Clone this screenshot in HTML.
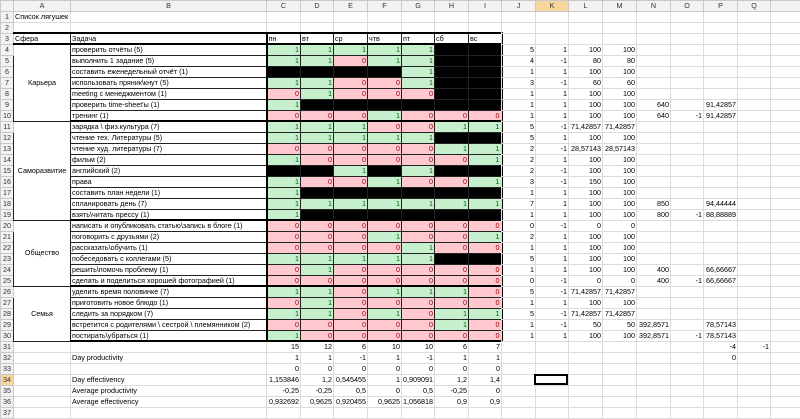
<!DOCTYPE html>
<html><head><meta charset="utf-8">
<style>
body{margin:0;width:800px;height:412px;overflow:hidden;background:#fff;font-family:"Liberation Sans",Arial,sans-serif;font-size:7.2px;color:#000;position:relative}
table{border-collapse:collapse;table-layout:fixed;position:absolute;top:0}
td{height:10px;line-height:10px;padding:0 1px;border:1px solid #dcdcdc;white-space:nowrap;overflow:hidden;text-align:left}
td.v{overflow:visible}
td.n,tr.n td{text-align:right}
tr.hd td{background:#f2f2f2;border-color:#c9c9c9;text-align:center;color:#333}
td.h{background:#f2f2f2;border-color:#c9c9c9;text-align:center;color:#333;padding:0}
td.sel{background:#f7d69a!important}
tr.b td{border-color:#222}
tr.b td.h{border-color:#c9c9c9}
td.g{background:#c6efce;color:#006100;text-align:right}
td.r{background:#ffc7ce;color:#9c0006;text-align:right}
td.k{background:#000}
td.c{text-align:center}
tr.t td:not(.h){border-top:2px solid #000}
tr.bt td:not(.h){border-bottom:2px solid #000}
tr.s td{height:9px;line-height:9px}
td.L{border-left:2px solid #000!important}
td.R{border-right:2px solid #000!important}
#t1{left:0;width:501px}
#t2{left:501px;width:299px}
#t2 td{text-align:right}
#t2 tr.hd td{text-align:center}
.box{position:absolute;left:534px;top:374px;width:30px;height:7px;border:2px solid #000}
</style></head><body>
<table id="t1">
<colgroup><col style="width:13px"><col style="width:57px"><col style="width:196px"><col style="width:34px"><col style="width:33px"><col style="width:34px"><col style="width:34px"><col style="width:33px"><col style="width:34px"><col style="width:33px"></colgroup>
<tr class="hd"><td></td><td>A</td><td>B</td><td>C</td><td>D</td><td>E</td><td>F</td><td>G</td><td>H</td><td>I</td></tr>
<tr><td class="h">1</td><td class="v">Список лягушек</td><td></td><td></td><td></td><td></td><td></td><td></td><td></td><td></td></tr>
<tr class="s"><td class="h">2</td><td></td><td></td><td></td><td></td><td></td><td></td><td></td><td></td><td></td></tr>
<tr class="b t bt s"><td class="h">3</td><td>Сфера</td><td>Задача</td><td class="L">пн</td><td>вт</td><td>ср</td><td>чтв</td><td>пт</td><td>сб</td><td class="R">вс</td></tr>
<tr class="b"><td class="h">4</td><td rowspan="7" class="c">Карьера</td><td>проверить отчёты (5)</td><td class="g L">1</td><td class="g">1</td><td class="g">1</td><td class="g">1</td><td class="g">1</td><td class="k"></td><td class="k R"></td></tr>
<tr class="b"><td class="h">5</td><td>выполнить 1 задание (5)</td><td class="g L">1</td><td class="g">1</td><td class="r">0</td><td class="g">1</td><td class="g">1</td><td class="k"></td><td class="k R"></td></tr>
<tr class="b"><td class="h">6</td><td>составить еженедельный отчёт (1)</td><td class="k L"></td><td class="k"></td><td class="k"></td><td class="k"></td><td class="g">1</td><td class="k"></td><td class="k R"></td></tr>
<tr class="b"><td class="h">7</td><td>использовать пряник\кнут (5)</td><td class="g L">1</td><td class="g">1</td><td class="r">0</td><td class="r">0</td><td class="g">1</td><td class="k"></td><td class="k R"></td></tr>
<tr class="b"><td class="h">8</td><td>meeting с менеджментом (1)</td><td class="r L">0</td><td class="g">1</td><td class="r">0</td><td class="r">0</td><td class="r">0</td><td class="k"></td><td class="k R"></td></tr>
<tr class="b"><td class="h">9</td><td>проверить time-sheet'ы (1)</td><td class="g L">1</td><td class="k"></td><td class="k"></td><td class="k"></td><td class="k"></td><td class="k"></td><td class="k R"></td></tr>
<tr class="b bt s"><td class="h">10</td><td>тренинг (1)</td><td class="r L">0</td><td class="r">0</td><td class="r">0</td><td class="g">1</td><td class="r">0</td><td class="r">0</td><td class="r R">0</td></tr>
<tr class="b"><td class="h">11</td><td rowspan="9" class="c">Саморазвитие</td><td>зарядка \ физ.культура (7)</td><td class="g L">1</td><td class="g">1</td><td class="g">1</td><td class="r">0</td><td class="r">0</td><td class="g">1</td><td class="g R">1</td></tr>
<tr class="b"><td class="h">12</td><td>чтение тех. Литературы (5)</td><td class="g L">1</td><td class="g">1</td><td class="g">1</td><td class="g">1</td><td class="g">1</td><td class="k"></td><td class="k R"></td></tr>
<tr class="b"><td class="h">13</td><td>чтение худ. литературы (7)</td><td class="r L">0</td><td class="r">0</td><td class="r">0</td><td class="r">0</td><td class="r">0</td><td class="g">1</td><td class="g R">1</td></tr>
<tr class="b"><td class="h">14</td><td>фильм (2)</td><td class="g L">1</td><td class="r">0</td><td class="r">0</td><td class="r">0</td><td class="r">0</td><td class="r">0</td><td class="g R">1</td></tr>
<tr class="b"><td class="h">15</td><td>английский (2)</td><td class="k L"></td><td class="k"></td><td class="g">1</td><td class="k"></td><td class="g">1</td><td class="k"></td><td class="k R"></td></tr>
<tr class="b"><td class="h">16</td><td>права</td><td class="g L">1</td><td class="r">0</td><td class="r">0</td><td class="g">1</td><td class="r">0</td><td class="r">0</td><td class="g R">1</td></tr>
<tr class="b"><td class="h">17</td><td>составить план недели (1)</td><td class="g L">1</td><td class="k"></td><td class="k"></td><td class="k"></td><td class="k"></td><td class="k"></td><td class="k R"></td></tr>
<tr class="b"><td class="h">18</td><td>спланировать день (7)</td><td class="g L">1</td><td class="g">1</td><td class="g">1</td><td class="g">1</td><td class="g">1</td><td class="g">1</td><td class="g R">1</td></tr>
<tr class="b bt s"><td class="h">19</td><td>взять\читать прессу (1)</td><td class="g L">1</td><td class="k"></td><td class="k"></td><td class="k"></td><td class="k"></td><td class="k"></td><td class="k R"></td></tr>
<tr class="b"><td class="h">20</td><td rowspan="6" class="c">Общество</td><td>написать и опубликовать статью\запись в блоге (1)</td><td class="r L">0</td><td class="r">0</td><td class="r">0</td><td class="r">0</td><td class="r">0</td><td class="r">0</td><td class="r R">0</td></tr>
<tr class="b"><td class="h">21</td><td>поговорить с друзьями (2)</td><td class="r L">0</td><td class="r">0</td><td class="r">0</td><td class="g">1</td><td class="r">0</td><td class="r">0</td><td class="g R">1</td></tr>
<tr class="b"><td class="h">22</td><td>рассказать\обучить (1)</td><td class="r L">0</td><td class="r">0</td><td class="r">0</td><td class="r">0</td><td class="g">1</td><td class="r">0</td><td class="r R">0</td></tr>
<tr class="b"><td class="h">23</td><td>побеседовать с коллегами (5)</td><td class="g L">1</td><td class="g">1</td><td class="g">1</td><td class="g">1</td><td class="g">1</td><td class="k"></td><td class="k R"></td></tr>
<tr class="b"><td class="h">24</td><td>решить\помочь проблему (1)</td><td class="r L">0</td><td class="g">1</td><td class="r">0</td><td class="r">0</td><td class="r">0</td><td class="r">0</td><td class="r R">0</td></tr>
<tr class="b bt s"><td class="h">25</td><td>сделать и поделиться хорошей фотографией (1)</td><td class="r L">0</td><td class="r">0</td><td class="r">0</td><td class="r">0</td><td class="r">0</td><td class="r">0</td><td class="r R">0</td></tr>
<tr class="b"><td class="h">26</td><td rowspan="5" class="c">Семья</td><td>уделить время половинке (7)</td><td class="g L">1</td><td class="g">1</td><td class="r">0</td><td class="g">1</td><td class="g">1</td><td class="g">1</td><td class="r R">0</td></tr>
<tr class="b"><td class="h">27</td><td>приготовить новое блюдо (1)</td><td class="r L">0</td><td class="g">1</td><td class="r">0</td><td class="r">0</td><td class="r">0</td><td class="r">0</td><td class="r R">0</td></tr>
<tr class="b"><td class="h">28</td><td>следить за порядком (7)</td><td class="g L">1</td><td class="g">1</td><td class="r">0</td><td class="g">1</td><td class="r">0</td><td class="g">1</td><td class="g R">1</td></tr>
<tr class="b"><td class="h">29</td><td>встретится с родителями \ сестрой \ племянником (2)</td><td class="r L">0</td><td class="r">0</td><td class="r">0</td><td class="r">0</td><td class="r">0</td><td class="g">1</td><td class="r R">0</td></tr>
<tr class="b bt s"><td class="h">30</td><td>постирать\убраться (1)</td><td class="g L">1</td><td class="r">0</td><td class="r">0</td><td class="r">0</td><td class="r">0</td><td class="r">0</td><td class="r R">0</td></tr>
<tr><td class="h">31</td><td></td><td></td><td class="n">15</td><td class="n">12</td><td class="n">6</td><td class="n">10</td><td class="n">10</td><td class="n">6</td><td class="n">7</td></tr>
<tr><td class="h">32</td><td></td><td>Day productivity</td><td class="n">1</td><td class="n">1</td><td class="n">-1</td><td class="n">1</td><td class="n">-1</td><td class="n">1</td><td class="n">1</td></tr>
<tr><td class="h">33</td><td></td><td></td><td class="n">0</td><td class="n">0</td><td class="n">0</td><td class="n">0</td><td class="n">0</td><td class="n">0</td><td class="n">0</td></tr>
<tr><td class="h sel">34</td><td></td><td>Day effectivency</td><td class="n">1,153846</td><td class="n">1,2</td><td class="n">0,545455</td><td class="n">1</td><td class="n">0,909091</td><td class="n">1,2</td><td class="n">1,4</td></tr>
<tr><td class="h">35</td><td></td><td>Average productivity</td><td class="n">-0,25</td><td class="n">-0,25</td><td class="n">0,5</td><td class="n">0</td><td class="n">0,5</td><td class="n">-0,25</td><td class="n">0</td></tr>
<tr><td class="h">36</td><td></td><td>Average effectivency</td><td class="n">0,932692</td><td class="n">0,9625</td><td class="n">0,920455</td><td class="n">0,9625</td><td class="n">1,056818</td><td class="n">0,9</td><td class="n">0,9</td></tr>
<tr><td class="h">37</td><td></td><td></td><td></td><td></td><td></td><td></td><td></td><td></td><td></td></tr>
</table>

<table id="t2">
<colgroup><col style="width:34px"><col style="width:33px"><col style="width:34px"><col style="width:34px"><col style="width:34px"><col style="width:33px"><col style="width:34px"><col style="width:33px"><col style="width:30px"></colgroup>
<tr class="hd"><td>J</td><td class="sel">K</td><td>L</td><td>M</td><td>N</td><td>O</td><td>P</td><td>Q</td><td></td></tr>
<tr><td></td><td></td><td></td><td></td><td></td><td></td><td></td><td></td><td></td></tr>
<tr><td></td><td></td><td></td><td></td><td></td><td></td><td></td><td></td><td></td></tr>
<tr><td></td><td></td><td></td><td></td><td></td><td></td><td></td><td></td><td></td></tr>
<tr><td>5</td><td>1</td><td>100</td><td>100</td><td></td><td></td><td></td><td></td><td></td></tr>
<tr><td>4</td><td>-1</td><td>80</td><td>80</td><td></td><td></td><td></td><td></td><td></td></tr>
<tr><td>1</td><td>1</td><td>100</td><td>100</td><td></td><td></td><td></td><td></td><td></td></tr>
<tr><td>3</td><td>-1</td><td>60</td><td>60</td><td></td><td></td><td></td><td></td><td></td></tr>
<tr><td>1</td><td>1</td><td>100</td><td>100</td><td></td><td></td><td></td><td></td><td></td></tr>
<tr><td>1</td><td>1</td><td>100</td><td>100</td><td>640</td><td></td><td>91,42857</td><td></td><td></td></tr>
<tr><td>1</td><td>1</td><td>100</td><td>100</td><td>640</td><td>-1</td><td>91,42857</td><td></td><td></td></tr>
<tr><td>5</td><td>-1</td><td>71,42857</td><td>71,42857</td><td></td><td></td><td></td><td></td><td></td></tr>
<tr><td>5</td><td>1</td><td>100</td><td>100</td><td></td><td></td><td></td><td></td><td></td></tr>
<tr><td>2</td><td>-1</td><td>28,57143</td><td>28,57143</td><td></td><td></td><td></td><td></td><td></td></tr>
<tr><td>2</td><td>1</td><td>100</td><td>100</td><td></td><td></td><td></td><td></td><td></td></tr>
<tr><td>2</td><td>-1</td><td>100</td><td>100</td><td></td><td></td><td></td><td></td><td></td></tr>
<tr><td>3</td><td>-1</td><td>150</td><td>100</td><td></td><td></td><td></td><td></td><td></td></tr>
<tr><td>1</td><td>1</td><td>100</td><td>100</td><td></td><td></td><td></td><td></td><td></td></tr>
<tr><td>7</td><td>1</td><td>100</td><td>100</td><td>850</td><td></td><td>94,44444</td><td></td><td></td></tr>
<tr><td>1</td><td>1</td><td>100</td><td>100</td><td>800</td><td>-1</td><td>88,88889</td><td></td><td></td></tr>
<tr><td>0</td><td>-1</td><td>0</td><td>0</td><td></td><td></td><td></td><td></td><td></td></tr>
<tr><td>2</td><td>1</td><td>100</td><td>100</td><td></td><td></td><td></td><td></td><td></td></tr>
<tr><td>1</td><td>1</td><td>100</td><td>100</td><td></td><td></td><td></td><td></td><td></td></tr>
<tr><td>5</td><td>1</td><td>100</td><td>100</td><td></td><td></td><td></td><td></td><td></td></tr>
<tr><td>1</td><td>1</td><td>100</td><td>100</td><td>400</td><td></td><td>66,66667</td><td></td><td></td></tr>
<tr><td>0</td><td>-1</td><td>0</td><td>0</td><td>400</td><td>-1</td><td>66,66667</td><td></td><td></td></tr>
<tr><td>5</td><td>-1</td><td>71,42857</td><td>71,42857</td><td></td><td></td><td></td><td></td><td></td></tr>
<tr><td>1</td><td>1</td><td>100</td><td>100</td><td></td><td></td><td></td><td></td><td></td></tr>
<tr><td>5</td><td>-1</td><td>71,42857</td><td>71,42857</td><td></td><td></td><td></td><td></td><td></td></tr>
<tr><td>1</td><td>-1</td><td>50</td><td>50</td><td>392,8571</td><td></td><td>78,57143</td><td></td><td></td></tr>
<tr><td>1</td><td>1</td><td>100</td><td>100</td><td>392,8571</td><td>-1</td><td>78,57143</td><td></td><td></td></tr>
<tr><td></td><td></td><td></td><td></td><td></td><td></td><td>-4</td><td>-1</td><td></td></tr>
<tr><td></td><td></td><td></td><td></td><td></td><td></td><td>0</td><td></td><td></td></tr>
<tr><td></td><td></td><td></td><td></td><td></td><td></td><td></td><td></td><td></td></tr>
<tr><td></td><td></td><td></td><td></td><td></td><td></td><td></td><td></td><td></td></tr>
<tr><td></td><td></td><td></td><td></td><td></td><td></td><td></td><td></td><td></td></tr>
<tr><td></td><td></td><td></td><td></td><td></td><td></td><td></td><td></td><td></td></tr>
<tr><td></td><td></td><td></td><td></td><td></td><td></td><td></td><td></td><td></td></tr>
</table>
<div class="box"></div>
</body></html>
